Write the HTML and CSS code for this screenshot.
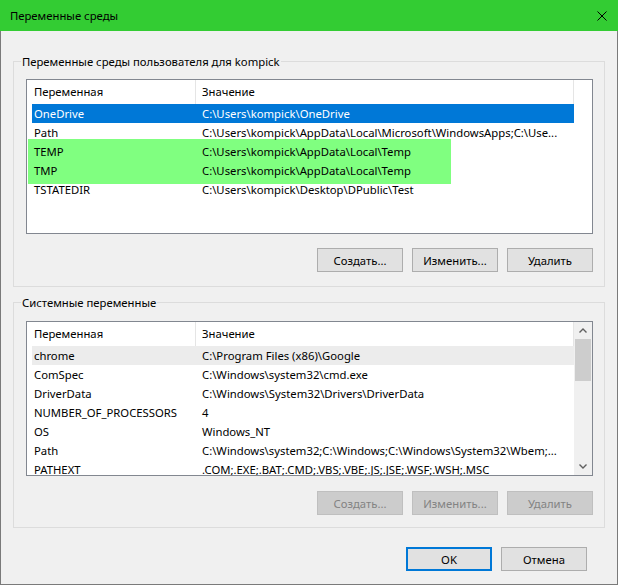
FILE: index.html
```html
<!DOCTYPE html>
<html lang="ru">

<head>
	<meta charset="UTF-8">
	<title>Переменные среды</title>
	<link rel="stylesheet" href="styles.css">
</head>

<body>
	<div class="window">
		<div class="titlebar">
			<span>Переменные среды</span>
			<svg class="close" width="10" height="10" viewBox="0 0 10 10"><path d="M0.5 0.5 L9.5 9.5 M9.5 0.5 L0.5 9.5" stroke="#000" stroke-width="1" fill="none"/></svg>
		</div>
		<div class="client">
			<!-- user variables -->
			<div class="group group-user">
				<div class="group-title">Переменные среды пользователя для kompick</div>
				<div class="listview">
					<div class="list-main">
						<div class="list-head">
							<div class="head-name">Переменная</div>
							<div class="head-value">Значение</div>
						</div>
						<div class="row selected">
							<div class="cell-name">OneDrive</div>
							<div class="cell-value">C:\Users\kompick\OneDrive</div>
						</div>
						<div class="row">
							<div class="cell-name">Path</div>
							<div class="cell-value">C:\Users\kompick\AppData\Local\Microsoft\WindowsApps;C:\Use...</div>
						</div>
						<div class="highlight">
							<div class="row">
								<div class="cell-name">TEMP</div>
								<div class="cell-value">C:\Users\kompick\AppData\Local\Temp</div>
							</div>
							<div class="row">
								<div class="cell-name">TMP</div>
								<div class="cell-value">C:\Users\kompick\AppData\Local\Temp</div>
							</div>
						</div>
						<div class="row">
							<div class="cell-name">TSTATEDIR</div>
							<div class="cell-value">C:\Users\kompick\Desktop\DPublic\Test</div>
						</div>
					</div>
				</div>
				<div class="btn-row">
					<button class="btn">Создать...</button>
					<button class="btn">Изменить...</button>
					<button class="btn">Удалить</button>
				</div>
			</div>

			<!-- system variables -->
			<div class="group group-system">
				<div class="group-title">Системные переменные</div>
				<div class="listview">
					<div class="list-main">
						<div class="list-head">
							<div class="head-name">Переменная</div>
							<div class="head-value">Значение</div>
						</div>
						<div class="row hover">
							<div class="cell-name">chrome</div>
							<div class="cell-value">C:\Program Files (x86)\Google</div>
						</div>
						<div class="row">
							<div class="cell-name">ComSpec</div>
							<div class="cell-value">C:\Windows\system32\cmd.exe</div>
						</div>
						<div class="row">
							<div class="cell-name">DriverData</div>
							<div class="cell-value">C:\Windows\System32\Drivers\DriverData</div>
						</div>
						<div class="row">
							<div class="cell-name">NUMBER_OF_PROCESSORS</div>
							<div class="cell-value">4</div>
						</div>
						<div class="row">
							<div class="cell-name">OS</div>
							<div class="cell-value">Windows_NT</div>
						</div>
						<div class="row">
							<div class="cell-name">Path</div>
							<div class="cell-value">C:\Windows\system32;C:\Windows;C:\Windows\System32\Wbem;...</div>
						</div>
						<div class="row">
							<div class="cell-name">PATHEXT</div>
							<div class="cell-value">.COM;.EXE;.BAT;.CMD;.VBS;.VBE;.JS;.JSE;.WSF;.WSH;.MSC</div>
						</div>
					</div>
					<div class="scrollbar">
						<div class="sb-btn"><svg width="8" height="5" viewBox="0 0 8 5"><path d="M0.5 4.5 L4 1 L7.5 4.5" stroke="#606060" stroke-width="1.4" fill="none"/></svg></div>
						<div class="sb-thumb"></div>
						<div class="sb-track"></div>
						<div class="sb-btn"><svg width="8" height="5" viewBox="0 0 8 5"><path d="M0.5 0.5 L4 4 L7.5 0.5" stroke="#606060" stroke-width="1.4" fill="none"/></svg></div>
					</div>
				</div>
				<div class="btn-row">
					<button class="btn" disabled>Создать...</button>
					<button class="btn" disabled>Изменить...</button>
					<button class="btn" disabled>Удалить</button>
				</div>
			</div>

			<div class="dialog-buttons">
				<button class="btn btn-default">OK</button>
				<button class="btn">Отмена</button>
			</div>
		</div>
	</div>
</body>

</html>
```

FILE: styles.css
```css
* {
	margin: 0;
	padding: 0;
}

body {
	font-family: "Noto Sans", sans-serif;
	font-size: 11.3px;
	color: #000;
	background-color: #f0f0f0;
}

.window {
	width: 618px;
	height: 585px;
	display: flex;
	flex-direction: column;
}

.titlebar {
	height: 31px;
	background-color: #33cc33;
	display: flex;
	justify-content: space-between;
	align-items: center;
	padding: 0 11px 0 10px;
}

.close {
	display: block;
}

.client {
	flex: 1;
	background-color: #f0f0f0;
	border: 1px solid #7a7a7a;
	border-top: none;
}

/* group boxes */
.group {
	border: 1px solid #dcdcdc;
	margin: 0 12px;
	padding: 0 11px 14px 12px;
}

.group-user {
	margin-top: 30px;
	margin-bottom: 15px;
}

.group-system {
	padding-bottom: 12px;
}

.group-title {
	width: max-content;
	margin: -8px 0 0 -5px;
	padding: 0 1px;
	line-height: 16px;
	background-color: #f0f0f0;
}

/* list views */
.listview {
	display: flex;
	height: 155px;
	box-sizing: border-box;
	border: 1px solid #828790;
	background-color: #fff;
	margin-top: 9px;
	overflow: hidden;
}

.group-system .listview {
	margin-top: 10px;
}

.list-main {
	width: 547px;
	overflow: hidden;
}

.list-head {
	display: flex;
	height: 24px;
	line-height: 24px;
}

.head-name {
	width: 169px;
	padding-left: 7px;
	box-sizing: border-box;
	border-right: 1px solid #e5e5e5;
}

.head-value {
	width: 378px;
	padding-left: 6px;
	box-sizing: border-box;
	border-right: 1px solid #e5e5e5;
}

.row {
	display: flex;
	width: 542px;
	height: 19px;
	line-height: 19px;
	margin-left: 5px;
	white-space: nowrap;
}

.cell-name {
	width: 164px;
	padding-left: 2px;
	box-sizing: border-box;
	overflow: hidden;
}

.cell-value {
	flex: 1;
	padding-left: 6px;
	overflow: hidden;
}

.selected {
	background-color: #0078d7;
	color: #fff;
}

.hover {
	background-color: #ececec;
}

.highlight {
	width: 423px;
	margin: -3px 0 -4px 1px;
	padding: 3px 0 4px 0;
	background-color: #80ff80;
}

.highlight .row {
	margin-left: 4px;
}

/* scrollbar */
.scrollbar {
	width: 18px;
	background-color: #f0f0f0;
	display: flex;
	flex-direction: column;
	align-items: center;
}

.sb-btn {
	height: 17px;
	width: 100%;
	display: flex;
	align-items: center;
	justify-content: center;
}

.sb-thumb {
	width: 16px;
	height: 42px;
	background-color: #cdcdcd;
}

.sb-track {
	flex: 1;
}

/* buttons */
.btn-row {
	display: flex;
	justify-content: flex-end;
	gap: 9px;
	margin-top: 14px;
}

.group-system .btn-row {
	margin-top: 15px;
}

.btn {
	width: 86px;
	height: 24px;
	box-sizing: border-box;
	border: 1px solid #adadad;
	background-color: #e1e1e1;
	font-family: inherit;
	font-size: 11.3px;
	color: #000;
	text-align: center;
}

.btn:disabled {
	background-color: #cccccc;
	border-color: #bfbfbf;
	color: #838383;
}

.btn-default {
	border: 2px solid #0078d7;
}

.dialog-buttons {
	display: flex;
	justify-content: flex-end;
	gap: 9px;
	margin-top: 19px;
	padding-right: 30px;
}
```
